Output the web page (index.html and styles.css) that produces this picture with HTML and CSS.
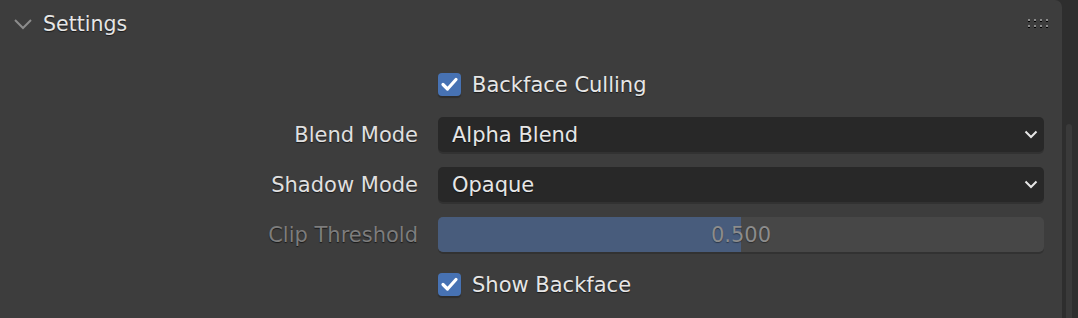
FILE: index.html
```html
<!DOCTYPE html>
<html>
<head>
<meta charset="utf-8">
<link rel="stylesheet" href="styles.css">
</head>
<body>
<div class="app">
  <div class="panel">
    <div class="header">
      <svg class="disclosure" width="20" height="12" viewBox="0 0 20 12"><path d="M2 2 L10 10 L18 2" fill="none" stroke="#8c8c8c" stroke-width="2"/></svg>
      <span class="title">Settings</span>
      <div class="grip">
        <span></span><span></span><span></span><span></span>
        <span></span><span></span><span></span><span></span>
      </div>
    </div>
    <div class="props">
      <div class="label"></div>
      <div class="check-row">
        <span class="checkbox"><svg width="23" height="23" viewBox="0 0 23 23"><path d="M5 11.5 L9.5 16 L18 6.5" fill="none" stroke="#fff" stroke-width="3.2" stroke-linecap="round" stroke-linejoin="round"/></svg></span>
        <span class="check-text">Backface Culling</span>
      </div>

      <div class="label">Blend Mode</div>
      <div class="dropdown"><span>Alpha Blend</span><svg width="14" height="9" viewBox="0 0 14 9"><path d="M1.5 1.5 L7 7 L12.5 1.5" fill="none" stroke="#e6e6e6" stroke-width="2"/></svg></div>

      <div class="label">Shadow Mode</div>
      <div class="dropdown"><span>Opaque</span><svg width="14" height="9" viewBox="0 0 14 9"><path d="M1.5 1.5 L7 7 L12.5 1.5" fill="none" stroke="#e6e6e6" stroke-width="2"/></svg></div>

      <div class="label disabled">Clip Threshold</div>
      <div class="slider"><div class="fill" style="width:50%"></div><span class="value">0.500</span></div>

      <div class="label"></div>
      <div class="check-row">
        <span class="checkbox"><svg width="23" height="23" viewBox="0 0 23 23"><path d="M5 11.5 L9.5 16 L18 6.5" fill="none" stroke="#fff" stroke-width="3.2" stroke-linecap="round" stroke-linejoin="round"/></svg></span>
        <span class="check-text">Show Backface</span>
      </div>
    </div>
  </div>
  <div class="gutter"><div class="thumb"></div></div>
</div>
</body>
</html>
```
FILE: styles.css
```css
html, body {
  margin: 0;
  padding: 0;
  background: #2e2e2e;
}
body {
  font-family: "DejaVu Sans", sans-serif;
  color: #e6e6e6;
  width: 1078px;
  height: 318px;
  overflow: hidden;
}
.app {
  display: flex;
  height: 318px;
}
.panel {
  width: 1062px;
  background: #3d3d3d;
  border-top-right-radius: 7px;
  flex: none;
}
.header {
  height: 48px;
  display: flex;
  align-items: center;
  position: relative;
}
.disclosure {
  margin-left: 13px;
  margin-right: 10px;
}
.title {
  font-size: 20.5px;
  text-shadow: 0 1px 1px rgba(0,0,0,0.6);
}
.grip {
  position: absolute;
  left: 1028px;
  top: 19px;
  display: grid;
  grid-template-columns: repeat(4, 2px);
  column-gap: 4px;
  row-gap: 4px;
}
.grip span {
  width: 2px;
  height: 2px;
  background: #8a8a8a;
  box-shadow: 0 1px 0 #000;
}
.props {
  display: grid;
  grid-template-columns: 418px 606px;
  column-gap: 20px;
  row-gap: 15px;
  grid-auto-rows: 35px;
  margin-top: 19px;
}
.label {
  display: flex;
  align-items: center;
  justify-content: flex-end;
  font-size: 21px;
  color: #e0e0e0;
  text-shadow: 0 1px 1px rgba(0,0,0,0.6);
}
.label.disabled {
  color: #7d7d7d;
}
.check-row {
  display: flex;
  align-items: center;
}
.checkbox {
  width: 23px;
  height: 23px;
  border-radius: 4px;
  background: #4772b3;
  box-shadow: 0 2px 1px rgba(0,0,0,0.25);
  display: flex;
}
.check-text {
  margin-left: 11px;
  font-size: 21px;
  text-shadow: 0 1px 1px rgba(0,0,0,0.6);
}
.dropdown {
  background: #282828;
  border-radius: 5px;
  box-shadow: 0 2px 0 rgba(0,0,0,0.18);
  display: flex;
  align-items: center;
  justify-content: space-between;
  padding: 0 6px 0 14px;
  font-size: 21px;
  text-shadow: 0 1px 1px rgba(0,0,0,0.6);
}
.slider {
  background: #474747;
  border-radius: 5px;
  box-shadow: 0 2px 0 rgba(0,0,0,0.18);
  position: relative;
  overflow: hidden;
  display: flex;
  align-items: center;
  justify-content: center;
}
.fill {
  position: absolute;
  left: 0;
  top: 0;
  bottom: 0;
  background: #485c7c;
}
.value {
  position: relative;
  font-size: 21px;
  color: #8c8c8c;
  text-shadow: 0 1px 1px rgba(0,0,0,0.4);
}
.gutter {
  flex: 1;
  background: #2e2e2e;
  position: relative;
}
.thumb {
  position: absolute;
  left: 4px;
  top: 124px;
  width: 6px;
  height: 200px;
  border-radius: 3px;
  background: #3a3a3a;
}
```
